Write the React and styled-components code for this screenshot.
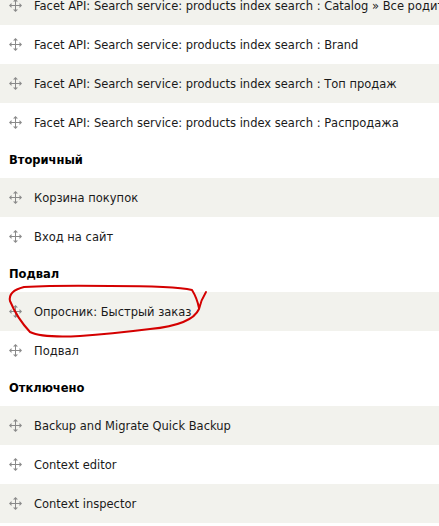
import React from 'react'
import styled, { createGlobalStyle } from 'styled-components'

const GlobalStyle = createGlobalStyle`
  html, body {
    margin: 0;
    padding: 0;
    background: #fff;
    overflow: hidden;
  }
  body {
    font-family: "DejaVu Sans", Verdana, sans-serif;
    font-size: 11.5px;
    color: #222;
  }
`

const Page = styled.div`
  position: relative;
  width: 439px;
  margin-top: -14px;
`

const Row = styled.div`
  display: flex;
  align-items: center;
  height: 39px;
  padding-left: 9px;
  background: ${p => (p.$odd ? '#f2f2ed' : '#fff')};
  white-space: nowrap;
  overflow: hidden;
`

const Handle = styled.svg`
  flex: none;
  width: 13px;
  height: 13px;
  margin-right: 12px;
`

const Label = styled.span`
  color: #1a1a1a;
`

const Region = styled.div`
  display: flex;
  align-items: center;
  height: 36px;
  padding-left: 9px;
  font-weight: bold;
  color: #000;
`

const Annotation = styled.svg`
  position: absolute;
  left: 0;
  top: 14px;
  pointer-events: none;
`

const DragIcon = () => (
  <Handle viewBox="0 0 13 13">
    <g fill="#8a8a8a">
      <rect x="6" y="2" width="1" height="9" />
      <rect x="2" y="6" width="9" height="1" />
      <path d="M6.5 0 L9 2.5 H4 Z" />
      <path d="M6.5 13 L9 10.5 H4 Z" />
      <path d="M0 6.5 L2.5 4 V9 Z" />
      <path d="M13 6.5 L10.5 4 V9 Z" />
    </g>
  </Handle>
)

const sections = [
  {
    title: null,
    items: [
      'Facet API: Search service: products index search : Catalog » Все родительские категории',
      'Facet API: Search service: products index search : Brand',
      'Facet API: Search service: products index search : Топ продаж',
      'Facet API: Search service: products index search : Распродажа',
    ],
  },
  { title: 'Вторичный', items: ['Корзина покупок', 'Вход на сайт'] },
  { title: 'Подвал', items: ['Опросник: Быстрый заказ', 'Подвал'] },
  {
    title: 'Отключено',
    items: ['Backup and Migrate Quick Backup', 'Context editor', 'Context inspector'],
  },
]

export default function App() {
  return (
    <>
      <GlobalStyle />
      <Page>
        {sections.map((s, i) => (
          <React.Fragment key={i}>
            {s.title && <Region>{s.title}</Region>}
            {s.items.map((item, j) => (
              <Row key={j} $odd={j % 2 === 0}>
                <DragIcon />
                <Label>{item}</Label>
              </Row>
            ))}
          </React.Fragment>
        ))}
        <Annotation width="439" height="526" viewBox="0 0 439 526">
          <path
            d="M206 292 Q201 300 199 309 Q192 325 150 329 Q110 334 80 336 Q42 338 30 332 Q17 318 10 301 Q8 291 24 287 Q60 285 110 286 Q175 286 192 290 Q197 298 199 308"
            fill="none"
            stroke="#d40000"
            strokeWidth="2"
            strokeLinecap="round"
            strokeLinejoin="round"
          />
        </Annotation>
      </Page>
    </>
  )
}
